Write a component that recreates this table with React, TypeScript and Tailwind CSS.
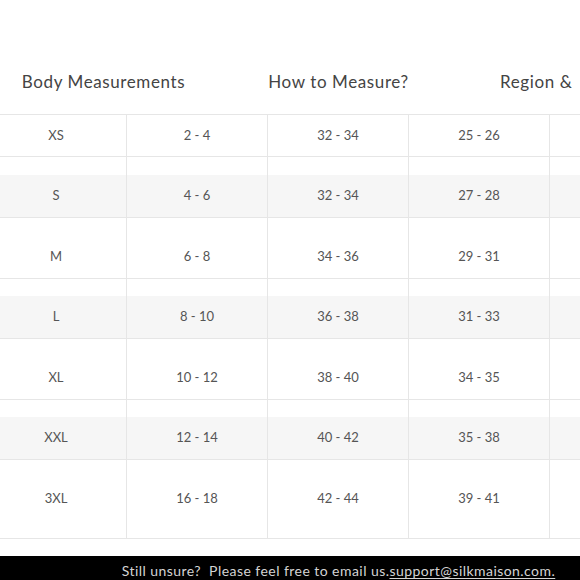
const rows = [
  { size: "XS", us: "2 - 4", bust: "32 - 34", waist: "25 - 26", hip: "35 - 36" },
  { size: "S", us: "4 - 6", bust: "32 - 34", waist: "27 - 28", hip: "36 - 37" },
  { size: "M", us: "6 - 8", bust: "34 - 36", waist: "29 - 31", hip: "38 - 40" },
  { size: "L", us: "8 - 10", bust: "36 - 38", waist: "31 - 33", hip: "40 - 42" },
  { size: "XL", us: "10 - 12", bust: "38 - 40", waist: "34 - 35", hip: "42 - 44" },
  { size: "XXL", us: "12 - 14", bust: "40 - 42", waist: "35 - 38", hip: "44 - 46" },
  { size: "3XL", us: "16 - 18", bust: "42 - 44", waist: "39 - 41", hip: "46 - 48" },
];

// top padding per row, the first row sits right under the header line
const topPad = ["", "pt-[18px]", "pt-[18px]", "pt-[17px]", "pt-[18px]", "pt-[17px]", "pt-[18px]"];

export default function App() {
  return (
    <div className="w-[580px] h-[580px] overflow-hidden bg-white flex flex-col font-['Lato',sans-serif]">
      <div className="w-[705px] -ml-[14px] shrink-0">
        {/* Tabs */}
        <div className="flex h-[114px] pt-[70px] text-[17px] leading-6 tracking-[0.6px] text-[#444] whitespace-nowrap">
          <div className="w-[235px] text-center">Body Measurements</div>
          <div className="w-[235px] text-center">How to Measure?</div>
          <div className="w-[235px] pl-[44px]">Region &amp;&nbsp;&nbsp;Size Conversion</div>
        </div>

        {/* Table */}
        <div className="border-t border-[#e6e6e6]">
          {rows.map((r, i) => {
            const shaded = i % 2 === 1;
            const last = i === rows.length - 1;
            const cells = [r.size, r.us, r.bust, r.waist, r.hip];
            return (
              <div key={r.size} className="grid grid-cols-5 border-b border-[#e6e6e6]">
                {cells.map((c, j) => (
                  <div
                    key={j}
                    className={`border-r border-[#e6e6e6] ${topPad[i]} ${last ? "pb-[18px]" : ""}`}
                  >
                    <div
                      className={`${i === 0 ? "h-[41px]" : "h-[42px]"} flex items-center justify-center text-[13px] text-[#555] ${shaded ? "bg-[#f6f6f6]" : ""}`}
                    >
                      {c}
                    </div>
                  </div>
                ))}
              </div>
            );
          })}
        </div>
      </div>

      <div className="h-[17px] shrink-0" />

      {/* Footer note */}
      <div className="bg-black w-[705px] -ml-[14px] h-[26px] pt-[3px] shrink-0 flex items-center justify-center">
        <p className="text-[14px] tracking-[0.45px] text-[#d4d4d4] whitespace-pre">
          Still unsure?  Please feel free to email us.
          <span className="underline underline-offset-2">support@silkmaison.com.</span>
        </p>
      </div>
    </div>
  );
}
